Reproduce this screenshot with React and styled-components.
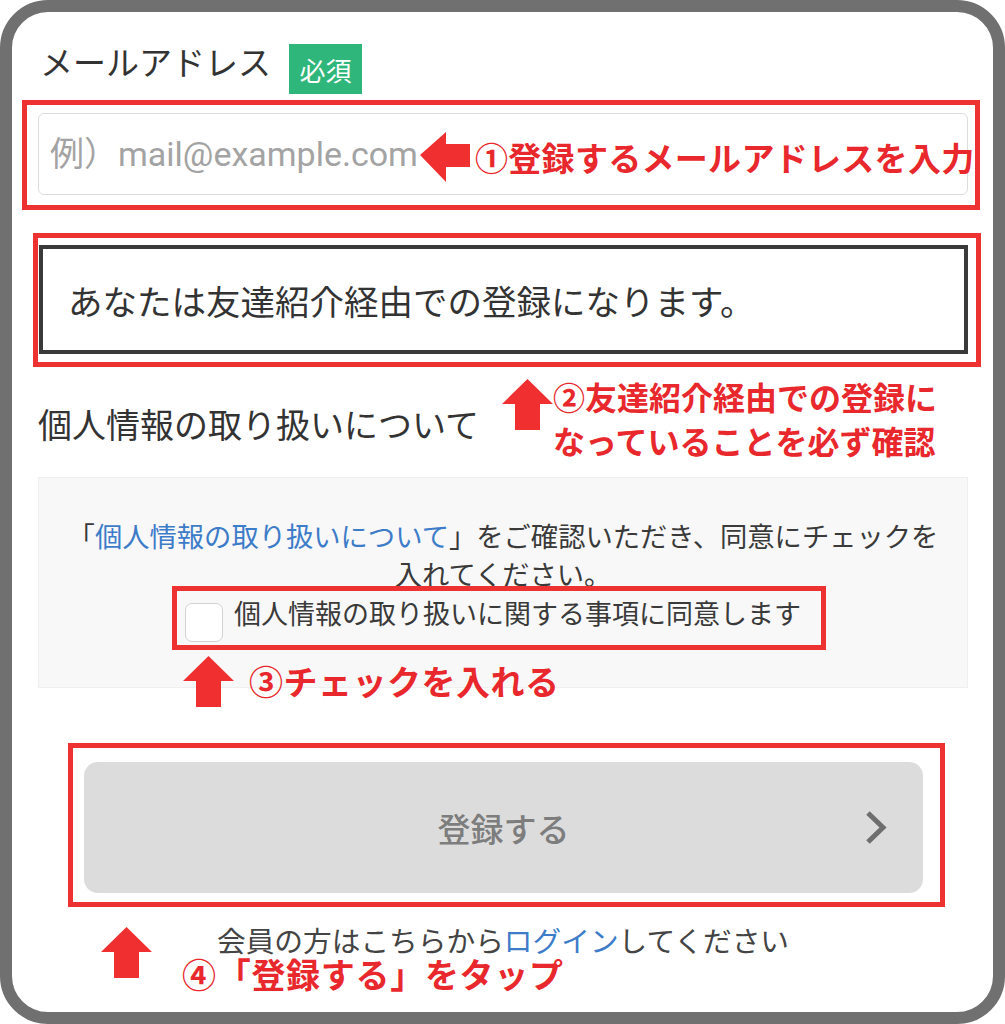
import React from "react";
import styled, { createGlobalStyle } from "styled-components";

const RED_LINE = "#ee3232";
const RED_TEXT = "#e8282c";
const RED_ARROW = "#f03030";
const JP = `"Noto Sans CJK JP", "Noto Sans", sans-serif`;

const Global = createGlobalStyle`
  html, body { margin: 0; padding: 0; background: #fff; }
  * { box-sizing: border-box; }
`;

const Frame = styled.div`
  width: 1005px;
  height: 1024px;
  border: 12px solid #707070;
  border-radius: 48px;
  background: #fff;
  padding: 32px 25px 0 26px;
  display: flex;
  flex-direction: column;
  font-family: ${JP};
  color: #333;
  overflow: hidden;
  & > * { flex-shrink: 0; }
`;

const LabelRow = styled.div`
  display: flex;
  align-items: center;
  gap: 18px;
  height: 50px;
  padding-left: 2px;
`;

const Label = styled.span`
  font-size: 33px;
  line-height: 33px;
  margin-bottom: 16px;
  color: #333;
`;

const Badge = styled.span`
  width: 73px;
  height: 50px;
  background: #2fb67a;
  color: #fff;
  font-size: 26px;
  display: flex;
  align-items: center;
  justify-content: center;
`;

const RedFrame = styled.div`
  position: relative;
  border: 5px solid ${RED_LINE};
  margin: ${(p) => p.$m};
  padding: ${(p) => p.$p};
`;

const EmailInput = styled.input`
  display: block;
  width: 100%;
  height: 82px;
  border: 1.5px solid #dcdcdc;
  border-radius: 6px;
  background: #fff;
  padding: 0 0 0 11px;
  font-family: Roboto, "Noto Sans CJK JP", sans-serif;
  font-size: 34px;
  color: #333;
  outline: none;
  &::placeholder { color: #a3a3a3; }
`;

const Callout = styled.div`
  position: absolute;
  left: ${(p) => p.$left}px;
  top: ${(p) => p.$top}px;
  height: 50px;
  display: flex;
  align-items: center;
  gap: 5px;
  pointer-events: none;
`;

const Caption = styled.div`
  font-family: ${JP};
  font-weight: 700;
  color: ${RED_TEXT};
  font-size: ${(p) => p.$size}px;
  line-height: ${(p) => p.$lh}px;
  letter-spacing: ${(p) => p.$ls || 0}px;
  white-space: nowrap;
  margin-top: ${(p) => p.$mt || 0}px;
`;

const NoticeBox = styled.div`
  height: 109px;
  border: 4px solid #3a3a3a;
  display: flex;
  align-items: center;
  padding-left: 25px;
  font-size: 34.5px;
  color: #333;
  white-space: nowrap;
`;

const HeadingRow = styled.div`
  display: flex;
  align-items: flex-start;
  margin-top: 8px;
`;

const Heading = styled.h2`
  margin: 27px 0 0 0;
  font-size: 34px;
  line-height: 44px;
  font-weight: 400;
  color: #333;
`;

const Annotation = styled.div`
  display: flex;
  align-items: flex-start;
  gap: ${(p) => p.$gap || 0}px;
  margin: ${(p) => p.$m || 0};
`;

const ArrowBox = styled.svg`
  display: block;
  flex-shrink: 0;
  margin-top: ${(p) => p.$mt || 0}px;
`;

const ConsentBox = styled.div`
  margin-top: 15px;
  height: 211px;
  background: #f8f8f8;
  border: 1px solid #efefef;
  padding-top: 38px;
  display: flex;
  flex-direction: column;
`;

const ConsentText = styled.p`
  margin: 0;
  text-align: center;
  font-size: 27.3px;
  line-height: 38px;
  color: #3a3a3a;
  white-space: nowrap;
`;

const Link = styled.span`
  color: #3d7cc9;
`;

const CheckGroup = styled.div`
  align-self: center;
  margin-right: 8px;
  display: flex;
  flex-direction: column;
  align-items: flex-start;
`;

const CheckRow = styled.label`
  display: flex;
  align-items: center;
  height: 64px;
  margin-top: -6px;
  border: 5px solid ${RED_LINE};
  padding: 0 20px 0 8px;
  gap: 11px;
`;

const CheckBox = styled.input.attrs({ type: "checkbox" })`
  appearance: none;
  -webkit-appearance: none;
  margin: 8px 0 0 0;
  width: 38px;
  height: 39px;
  border: 1.5px solid #d2d2d2;
  border-radius: 7px;
  background: #fff;
`;

const CheckLabel = styled.span`
  font-size: 27px;
  line-height: 32px;
  margin-bottom: 10px;
  color: #3a3a3a;
  white-space: nowrap;
`;

const SubmitButton = styled.button`
  width: 100%;
  height: 131px;
  border: none;
  border-radius: 14px;
  background: #dcdcdc;
  display: grid;
  grid-template-columns: 1fr auto 1fr;
  align-items: center;
  padding: 0;
  font-family: ${JP};
  font-size: 33px;
  font-weight: 500;
  color: #7d7d7d;
  cursor: default;
`;

const ChevronCell = styled.span`
  justify-self: end;
  margin-right: 36px;
  display: flex;
`;

const LoginText = styled.p`
  margin: 18px 0 0 0;
  text-align: center;
  font-size: 28.7px;
  line-height: 30px;
  color: #444;
  white-space: nowrap;
`;

const LeftArrow = () => (
  <ArrowBox width="50" height="50" viewBox="0 0 50 50">
    <polygon points="0,23 26,0 26,12 50,12 50,35 26,35 26,50" fill={RED_ARROW} />
  </ArrowBox>
);

const UpArrow = ({ mt }) => (
  <ArrowBox $mt={mt} width="51" height="51" viewBox="0 0 51 51">
    <polygon points="25.5,0 51,25 38,25 38,51 13,51 13,25 0,25" fill={RED_ARROW} />
  </ArrowBox>
);

const Chevron = () => (
  <svg width="22" height="35" viewBox="0 0 22 35">
    <polyline points="3,3 18,17.5 3,32" fill="none" stroke="#6e6e6e" strokeWidth="5" strokeLinejoin="miter" />
  </svg>
);

export default function App() {
  return (
    <>
      <Global />
      <Frame>
        <LabelRow>
          <Label>メールアドレス</Label>
          <Badge>必須</Badge>
        </LabelRow>

        <RedFrame $m="6px -12px 0 -16px" $p="8px 7px 10px 11px">
          <EmailInput placeholder="例）mail@example.com" />
          <Callout $left={393} $top={27}>
            <LeftArrow />
            <Caption $size={33} $lh={50} $ls={0.3}>①登録するメールアドレスを入力</Caption>
          </Callout>
        </RedFrame>

        <RedFrame $m="23px -13px 0 -5px" $p="7px 8px 8px 1px">
          <NoticeBox>あなたは友達紹介経由での登録になります。</NoticeBox>
        </RedFrame>

        <HeadingRow>
          <Heading>個人情報の取り扱いについて</Heading>
          <Annotation $m="0 0 0 23px">
            <UpArrow mt={4} />
            <Caption $size={32} $lh={44} $mt={-1}>
              ②友達紹介経由での登録に
              <br />
              なっていることを必ず確認
            </Caption>
          </Annotation>
        </HeadingRow>

        <ConsentBox>
          <ConsentText>
            「<Link>個人情報の取り扱いについて</Link>」をご確認いただき、同意にチェックを
            <br />
            入れてください。
          </ConsentText>
          <CheckGroup>
            <CheckRow>
              <CheckBox />
              <CheckLabel>個人情報の取り扱いに関する事項に同意します</CheckLabel>
            </CheckRow>
            <Annotation $m="6px 0 0 11px" $gap={15}>
              <UpArrow />
              <Caption $size={34} $lh={44} $mt={3} $ls={0.5}>③チェックを入れる</Caption>
            </Annotation>
          </CheckGroup>
        </ConsentBox>

        <RedFrame $m="55px 23px 0 30px" $p="14px 17px 9px 11px">
          <SubmitButton disabled>
            <span />
            <span>登録する</span>
            <ChevronCell>
              <Chevron />
            </ChevronCell>
          </SubmitButton>
        </RedFrame>

        <LoginText>
          会員の方はこちらから<Link>ログイン</Link>してください
        </LoginText>
        <Annotation $m="-28px 0 0 63px" $gap={30}>
          <UpArrow />
          <Caption $size={34} $lh={34} $mt={30} $ls={0.7}>④「登録する」をタップ</Caption>
        </Annotation>
      </Frame>
    </>
  );
}
